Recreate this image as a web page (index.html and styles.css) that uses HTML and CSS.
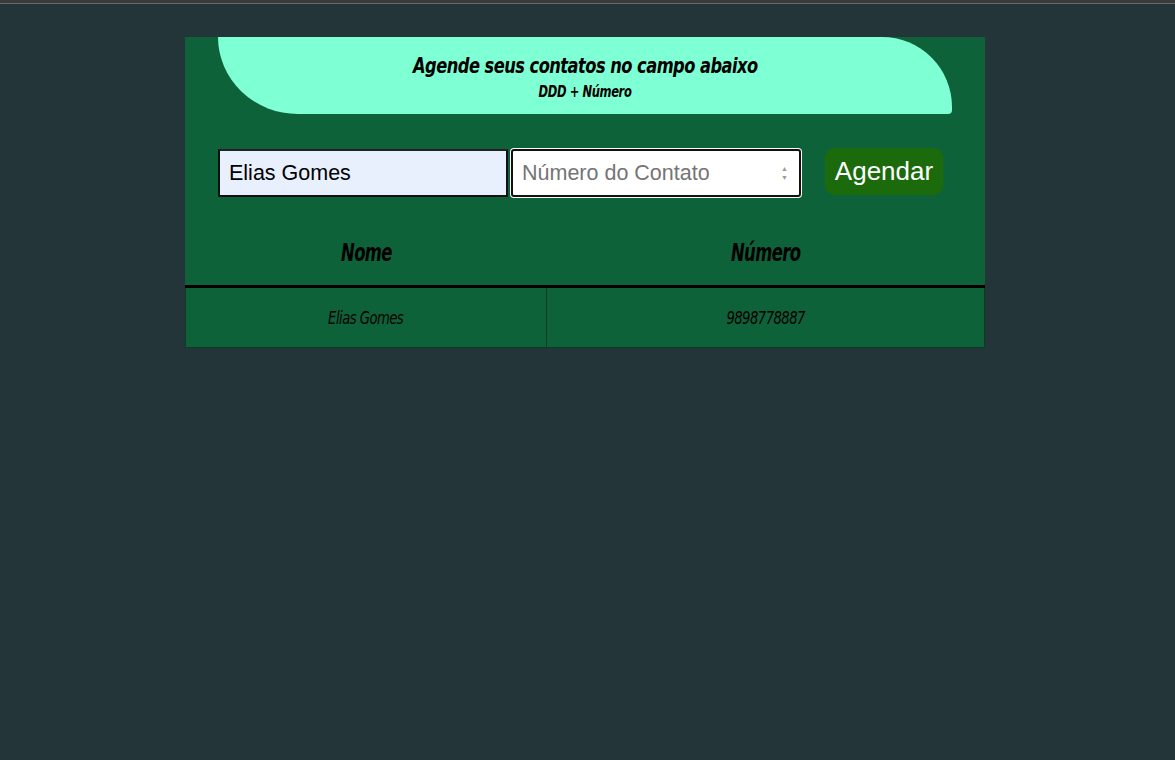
FILE: index.html
```html
<!DOCTYPE html>
<html lang="pt-BR">
<head>
<meta charset="utf-8">
<title>Agenda</title>
<link rel="stylesheet" href="styles.css">
</head>
<body>
<div class="topbar"></div>
<main class="app">
  <header class="banner">
    <h1 class="title"><span class="narrow">Agende seus contatos no campo abaixo</span></h1>
    <p class="subtitle"><span class="narrow">DDD + Número</span></p>
  </header>
  <form class="form">
    <input class="field field-name" type="text" value="Elias Gomes">
    <div class="field field-number">
      <span class="placeholder">Número do Contato</span>
      <span class="spin"><span>▲</span><span>▼</span></span>
    </div>
    <button class="btn" type="button">Agendar</button>
  </form>
  <table class="table">
    <thead>
      <tr><th class="col-name"><span class="narrow-h">Nome</span></th><th><span class="narrow-h">Número</span></th></tr>
    </thead>
    <tbody>
      <tr><td><span class="narrow-d">Elias Gomes</span></td><td><span class="narrow-d">9898778887</span></td></tr>
    </tbody>
  </table>
</main>
</body>
</html>
```
FILE: styles.css
```css
html, body { margin: 0; padding: 0; }
body {
  background: #233538;
  min-height: 760px;
  font-family: "DejaVu Sans", sans-serif;
}
.topbar {
  height: 3px;
  background: #3b3b3b;
  border-bottom: 1px solid #6a6a6a;
}
.app {
  width: 800px;
  margin: 33px 0 0 185px;
  background: #0e623a;
}
.banner {
  margin: 0 33px;
  height: 77px;
  background: #7fffd4;
  border-radius: 0 70px 4px 80px / 0 70px 4px 77px;
  text-align: center;
  box-sizing: border-box;
  padding-top: 16px;
}
.narrow, .narrow-h, .narrow-d { display: inline-block; }
.title {
  margin: 0;
  font-family: "DejaVu Sans Condensed", "DejaVu Sans", sans-serif;
  font-stretch: condensed;
  font-style: italic;
  font-weight: bold;
  font-size: 21px;
  line-height: 27px;
  color: #000;
  letter-spacing: -0.6px;
}
.title .narrow { transform: scaleX(0.86); }
.subtitle {
  margin: 3px 0 0;
  font-family: "DejaVu Sans Condensed", "DejaVu Sans", sans-serif;
  font-stretch: condensed;
  font-style: italic;
  font-weight: bold;
  font-size: 16px;
  line-height: 18px;
  letter-spacing: -0.5px;
  color: #000;
}
.subtitle .narrow { transform: scaleX(0.8); }
.form {
  display: flex;
  align-items: center;
  padding: 35px 0 0 33px;
  height: 48px;
  margin: 0;
}
.field {
  box-sizing: border-box;
  height: 48px;
  width: 290px;
  font-family: "Liberation Sans", Arial, sans-serif;
  font-size: 21.5px;
}
.field-name {
  background: #e8f0fe;
  border: 2px solid #111;
  border-top-color: #222;
  padding: 0 9px;
  color: #000;
  outline: none;
}
.field-number {
  margin-left: 3px;
  background: #fff;
  border: 2px solid #111;
  border-radius: 3px;
  box-shadow: 0 0 0 1px #fff;
  display: flex;
  align-items: center;
  padding: 0 9px;
}
.placeholder { color: #757575; flex: 1; }
.spin {
  display: flex;
  flex-direction: column;
  font-size: 7px;
  color: #9a9a9a;
  padding: 2px 2px;
  line-height: 9px;
  margin-right: 0;
}
.btn {
  margin-left: 24px;
  height: 47px;
  width: 118px;
  margin-top: -4px;
  background: #1b6a0c;
  color: #fff;
  border: none;
  border-radius: 9px;
  font-family: "Liberation Sans", Arial, sans-serif;
  font-size: 26px;
  padding: 0;
}
.table {
  width: 800px;
  margin-top: 23px;
  border-collapse: collapse;
  font-family: "DejaVu Sans Condensed", "DejaVu Sans", sans-serif;
  font-stretch: condensed;
  font-style: italic;
  color: #000;
}
.table th {
  height: 65px;
  font-weight: bold;
  font-size: 24px;
  letter-spacing: -0.8px;
  border-bottom: 3px solid #000;
  padding: 0;
}
.narrow-h { transform: scaleX(0.76); }
.col-name { width: 361px; }
.table td {
  height: 59px;
  text-align: center;
  font-size: 17px;
  letter-spacing: -0.6px;
  border: 1px solid #0a3d22;
  padding: 0;
}
.narrow-d { transform: scaleX(0.86); }
```
